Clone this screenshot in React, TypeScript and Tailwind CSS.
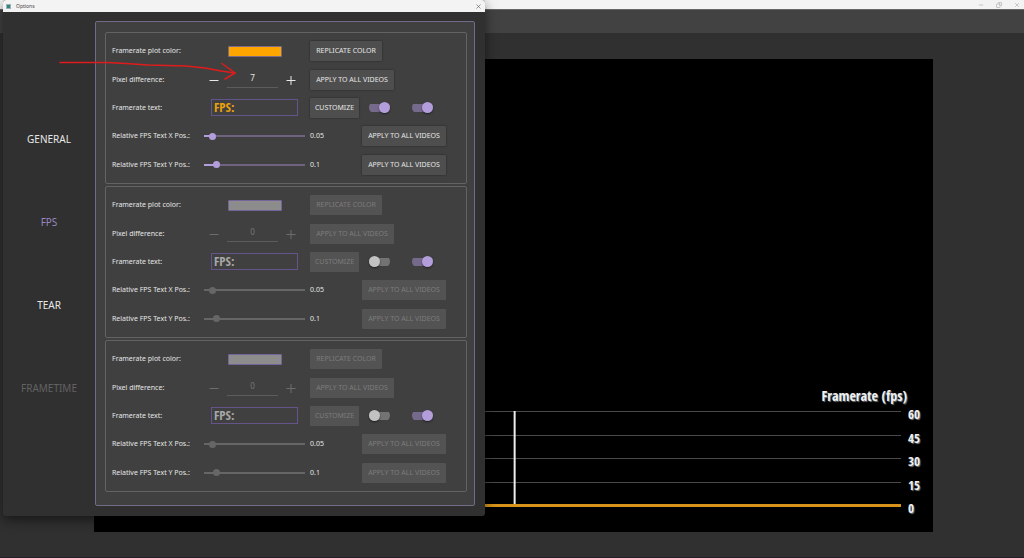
import React from "react";
import { Copy, Minus, X } from "lucide-react";

interface VideoSettings {
  id: string;
  enabled: boolean;
  pixelDifference: string;
  showText: boolean;
}

const videos: VideoSettings[] = [
  { id: "video-1", enabled: true, pixelDifference: "7", showText: true },
  { id: "video-2", enabled: false, pixelDifference: "0", showText: false },
  { id: "video-3", enabled: false, pixelDifference: "0", showText: false },
];

const sections = [
  { name: "GENERAL", className: "text-[#e8e8e8]" },
  { name: "FPS", className: "text-[#9a86c0]" },
  { name: "TEAR", className: "text-[#e8e8e8]" },
  { name: "FRAMETIME", className: "text-[#626262]", disabled: true },
];

const scale = ["60", "45", "30", "15", "0"];

interface ActionButtonProps {
  children: React.ReactNode;
  disabled?: boolean;
  className?: string;
}

const ActionButton = ({ children, disabled, className = "" }: ActionButtonProps) => (
  <button
    type="button"
    disabled={disabled}
    className={`h-5 shrink-0 whitespace-nowrap rounded-[1px] bg-[#4e4e4e] text-center text-[#e6e6e6] shadow-[0_0_2px_rgba(0,0,0,0.5)] disabled:bg-[#535353] disabled:text-[#7c7c7c] disabled:shadow-none ${className}`}
  >
    {children}
  </button>
);

const Toggle = ({ label, checked }: { label: string; checked: boolean }) => (
  <input
    type="checkbox"
    role="switch"
    aria-label={label}
    defaultChecked={checked}
    className="flex h-[11px] w-[21px] shrink-0 appearance-none items-center rounded-full bg-[linear-gradient(#737373,#737373)] bg-[length:100%_8px] bg-center bg-no-repeat before:block before:size-[11px] before:rounded-full before:bg-[#c2c2c2] before:shadow-[0_1px_2px_rgba(0,0,0,0.5)] checked:justify-end checked:bg-[linear-gradient(#766a8c,#766a8c)] checked:before:bg-[#b39ddb]"
  />
);

interface SliderProps {
  id: string;
  value: number;
  disabled: boolean;
}

const Slider = ({ id, value, disabled }: SliderProps) => {
  const fill = disabled ? "#666666" : "#b39ddb";
  const rest = disabled ? "#666666" : "#6e6480";
  const stop = `${value * 100 + 3}%`;

  return (
    <input
      id={id}
      type="range"
      min={0}
      max={1}
      step={0.01}
      defaultValue={value}
      disabled={disabled}
      className="h-2 w-full appearance-none bg-[length:100%_2px] bg-center bg-no-repeat [&::-webkit-slider-thumb]:size-[7px] [&::-webkit-slider-thumb]:appearance-none [&::-webkit-slider-thumb]:rounded-full [&::-webkit-slider-thumb]:bg-[#b39ddb] disabled:[&::-webkit-slider-thumb]:bg-[#666666]"
      style={{ backgroundImage: `linear-gradient(to right, ${fill} ${stop}, ${rest} ${stop})` }}
    />
  );
};

interface RowProps {
  label: string;
  htmlFor: string;
  control: React.ReactNode;
  children: React.ReactNode;
}

const Row = ({ label, htmlFor, control, children }: RowProps) => (
  <div className="grid grid-cols-[92px_101px_1fr] items-center">
    <label htmlFor={htmlFor} className="whitespace-nowrap text-[#e6e6e6]">
      {label}
    </label>
    <div className="flex items-center justify-center">{control}</div>
    <div className="flex items-center pl-[5px]">{children}</div>
  </div>
);

const VideoGroup = ({ video }: { video: VideoSettings }) => {
  const { id, enabled, pixelDifference, showText } = video;
  const disabled = !enabled;

  return (
    <fieldset className="rounded-[2px] border border-[#636363] pl-[6px]">
      <div className="grid h-[150px] grid-rows-5 py-1">
        <Row
          label="Framerate plot color:"
          htmlFor={`${id}-color`}
          control={
            <button
              id={`${id}-color`}
              type="button"
              disabled={disabled}
              className="h-[11px] w-[54px] rounded-[1px] border border-[#7d6a86] bg-[#ffa500] disabled:border-[#75649a] disabled:bg-[#8c8c8c]"
            />
          }
        >
          <ActionButton disabled={disabled} className="w-[72px]">REPLICATE COLOR</ActionButton>
        </Row>

        <Row
          label="Pixel difference:"
          htmlFor={`${id}-diff`}
          control={
            <div className="flex items-center gap-2 pr-1">
              <button type="button" aria-label="Decrease" disabled={disabled} className="text-[#e8e8e8] disabled:text-[#6c6c6c]">
                <svg viewBox="0 0 10 10" className="size-[10px]" stroke="currentColor">
                  <path d="M0.5 5.5h9" />
                </svg>
              </button>
              <input
                id={`${id}-diff`}
                defaultValue={pixelDifference}
                disabled={disabled}
                className="h-[17px] w-[51px] border-b border-[#5c5c5c] pb-1 text-center text-[8px] text-[#e6e6e6] outline-none disabled:text-[#777777]"
              />
              <button type="button" aria-label="Increase" disabled={disabled} className="text-[#e8e8e8] disabled:text-[#6c6c6c]">
                <svg viewBox="0 0 10 10" className="size-[10px]" stroke="currentColor">
                  <path d="M0.5 5.5h9M5 1v9" />
                </svg>
              </button>
            </div>
          }
        >
          <ActionButton disabled={disabled} className="w-[84px]">APPLY TO ALL VIDEOS</ActionButton>
        </Row>

        <Row
          label="Framerate text:"
          htmlFor={`${id}-text`}
          control={
            <input
              id={`${id}-text`}
              defaultValue="FPS:"
              disabled={disabled}
              className="h-[17px] w-[87px] border border-[#65538c] pb-[2px] pl-[2px] font-['Liberation_Sans_Narrow','Open_Sans_Condensed','Liberation_Sans',sans-serif] text-[13px] font-bold leading-none text-[#eda20b] outline-none disabled:text-[#a8a8a8]"
            />
          }
        >
          <ActionButton disabled={disabled} className="w-[49px]">CUSTOMIZE</ActionButton>
          <div className="ml-[10px] flex gap-[22px]">
            <Toggle label="Show framerate text" checked={showText} />
            <Toggle label="Show framerate plot" checked />
          </div>
        </Row>

        <Row
          label="Relative FPS Text X Pos.:"
          htmlFor={`${id}-x`}
          control={<Slider id={`${id}-x`} value={0.05} disabled={disabled} />}
        >
          <output className="w-[52px] text-[#e6e6e6]">0.05</output>
          <ActionButton disabled={disabled} className="w-[84px]">APPLY TO ALL VIDEOS</ActionButton>
        </Row>

        <Row
          label="Relative FPS Text Y Pos.:"
          htmlFor={`${id}-y`}
          control={<Slider id={`${id}-y`} value={0.1} disabled={disabled} />}
        >
          <output className="w-[52px] text-[#e6e6e6]">0.1</output>
          <ActionButton disabled={disabled} className="w-[84px]">APPLY TO ALL VIDEOS</ActionButton>
        </Row>
      </div>
    </fieldset>
  );
};

const OptionsDialog = () => (
  <section
    role="dialog"
    aria-label="Options"
    className="absolute left-[3px] top-0 w-[47%] min-w-[482px] overflow-hidden rounded-[3px] bg-[#303030] shadow-[0_4px_12px_rgba(0,0,0,0.5)]"
  >
    <header className="flex h-3 items-center bg-[#f3f3f3] pl-[3px] pr-[3px] text-[5px] leading-none text-[#444444]">
      <span className="mr-[5px] h-[5px] w-[5px] border border-[#9fb0b8] bg-[#2f8577]" />
      <span className="flex-1">Options</span>
      <button type="button" aria-label="Close options" className="text-[#555555]">
        <X className="size-[7px]" />
      </button>
    </header>

    <div className="flex pb-[10px] pr-[10px] pt-[9px]">
      <nav className="flex w-[92px] flex-col justify-around py-[77px] text-[10px]">
        {sections.map((section) => (
          <button key={section.name} type="button" disabled={section.disabled} className={`h-4 ${section.className}`}>
            {section.name}
          </button>
        ))}
      </nav>
      <div className="flex flex-1 flex-col gap-[2px] rounded-[2px] border border-[#736a88] bg-[#404040] pb-[13px] pl-[9px] pr-[7px] pt-[10px]">
        {videos.map((video) => (
          <VideoGroup key={video.id} video={video} />
        ))}
      </div>
    </div>
  </section>
);

const FramerateChart = () => (
  <div className="pr-3 font-['Liberation_Sans_Narrow','Open_Sans_Condensed','Liberation_Sans',sans-serif] font-bold text-[#f0f0f0] [text-shadow:1px_1px_1px_#777777]">
    <h2 className="pr-[14px] text-right text-[14px] leading-5">Framerate (fps)</h2>
    <div className="flex">
      <svg className="mt-1 h-[98px] flex-1" aria-hidden="true">
        {[1, 25, 48, 72].map((y) => (
          <rect key={y} x="0" y={y} width="100%" height="1" fill="#4a4a4a" />
        ))}
        <rect x="0" y="94" width="100%" height="3" fill="#d8941a" />
        <rect x="52%" y="1" width="2" height="93" fill="#ededed" />
      </svg>
      <div className="flex h-[110px] w-5 flex-col justify-between pl-[7px] text-[13px] leading-4">
        {scale.map((value) => (
          <span key={value}>{value}</span>
        ))}
      </div>
    </div>
  </div>
);

const App = () => {
  return (
    <div className="relative flex min-h-screen flex-col overflow-hidden border-b border-[#241d24] bg-[#303030] font-['Noto_Sans',sans-serif] text-[7px] leading-[10px]">
      <header className="flex h-[9px] items-center justify-end gap-3 bg-[#f3f3f3] pr-1 text-[#999999]">
        <button type="button" aria-label="Minimize"><Minus className="size-[6px]" /></button>
        <button type="button" aria-label="Restore"><Copy className="size-[6px] -scale-x-100" /></button>
        <button type="button" aria-label="Close"><X className="size-[6px]" /></button>
      </header>
      <div className="h-6 border-t border-[#666666] bg-[#424242]" />

      <main className="mb-[25px] ml-[94px] mr-[91px] mt-[26px] flex flex-1 flex-col justify-end bg-black pb-4">
        <FramerateChart />
      </main>

      <OptionsDialog />

      {/* hand-drawn arrow pointing at the pixel difference field */}
      <svg
        viewBox="0 0 180 20"
        className="pointer-events-none absolute left-[58px] top-[60px] h-5 w-[180px]"
        fill="none"
        stroke="#e01b1b"
        strokeWidth="1.5"
        strokeLinecap="round"
        strokeLinejoin="round"
        aria-hidden="true"
      >
        <path d="M2 2.5L49 2.5L68 3.5L90 5L128 6L147 8L163 11L177 13" />
        <path d="M164 3.5L171 8.5L177 13L172 16L167 19" />
      </svg>
    </div>
  );
};

export default App;
